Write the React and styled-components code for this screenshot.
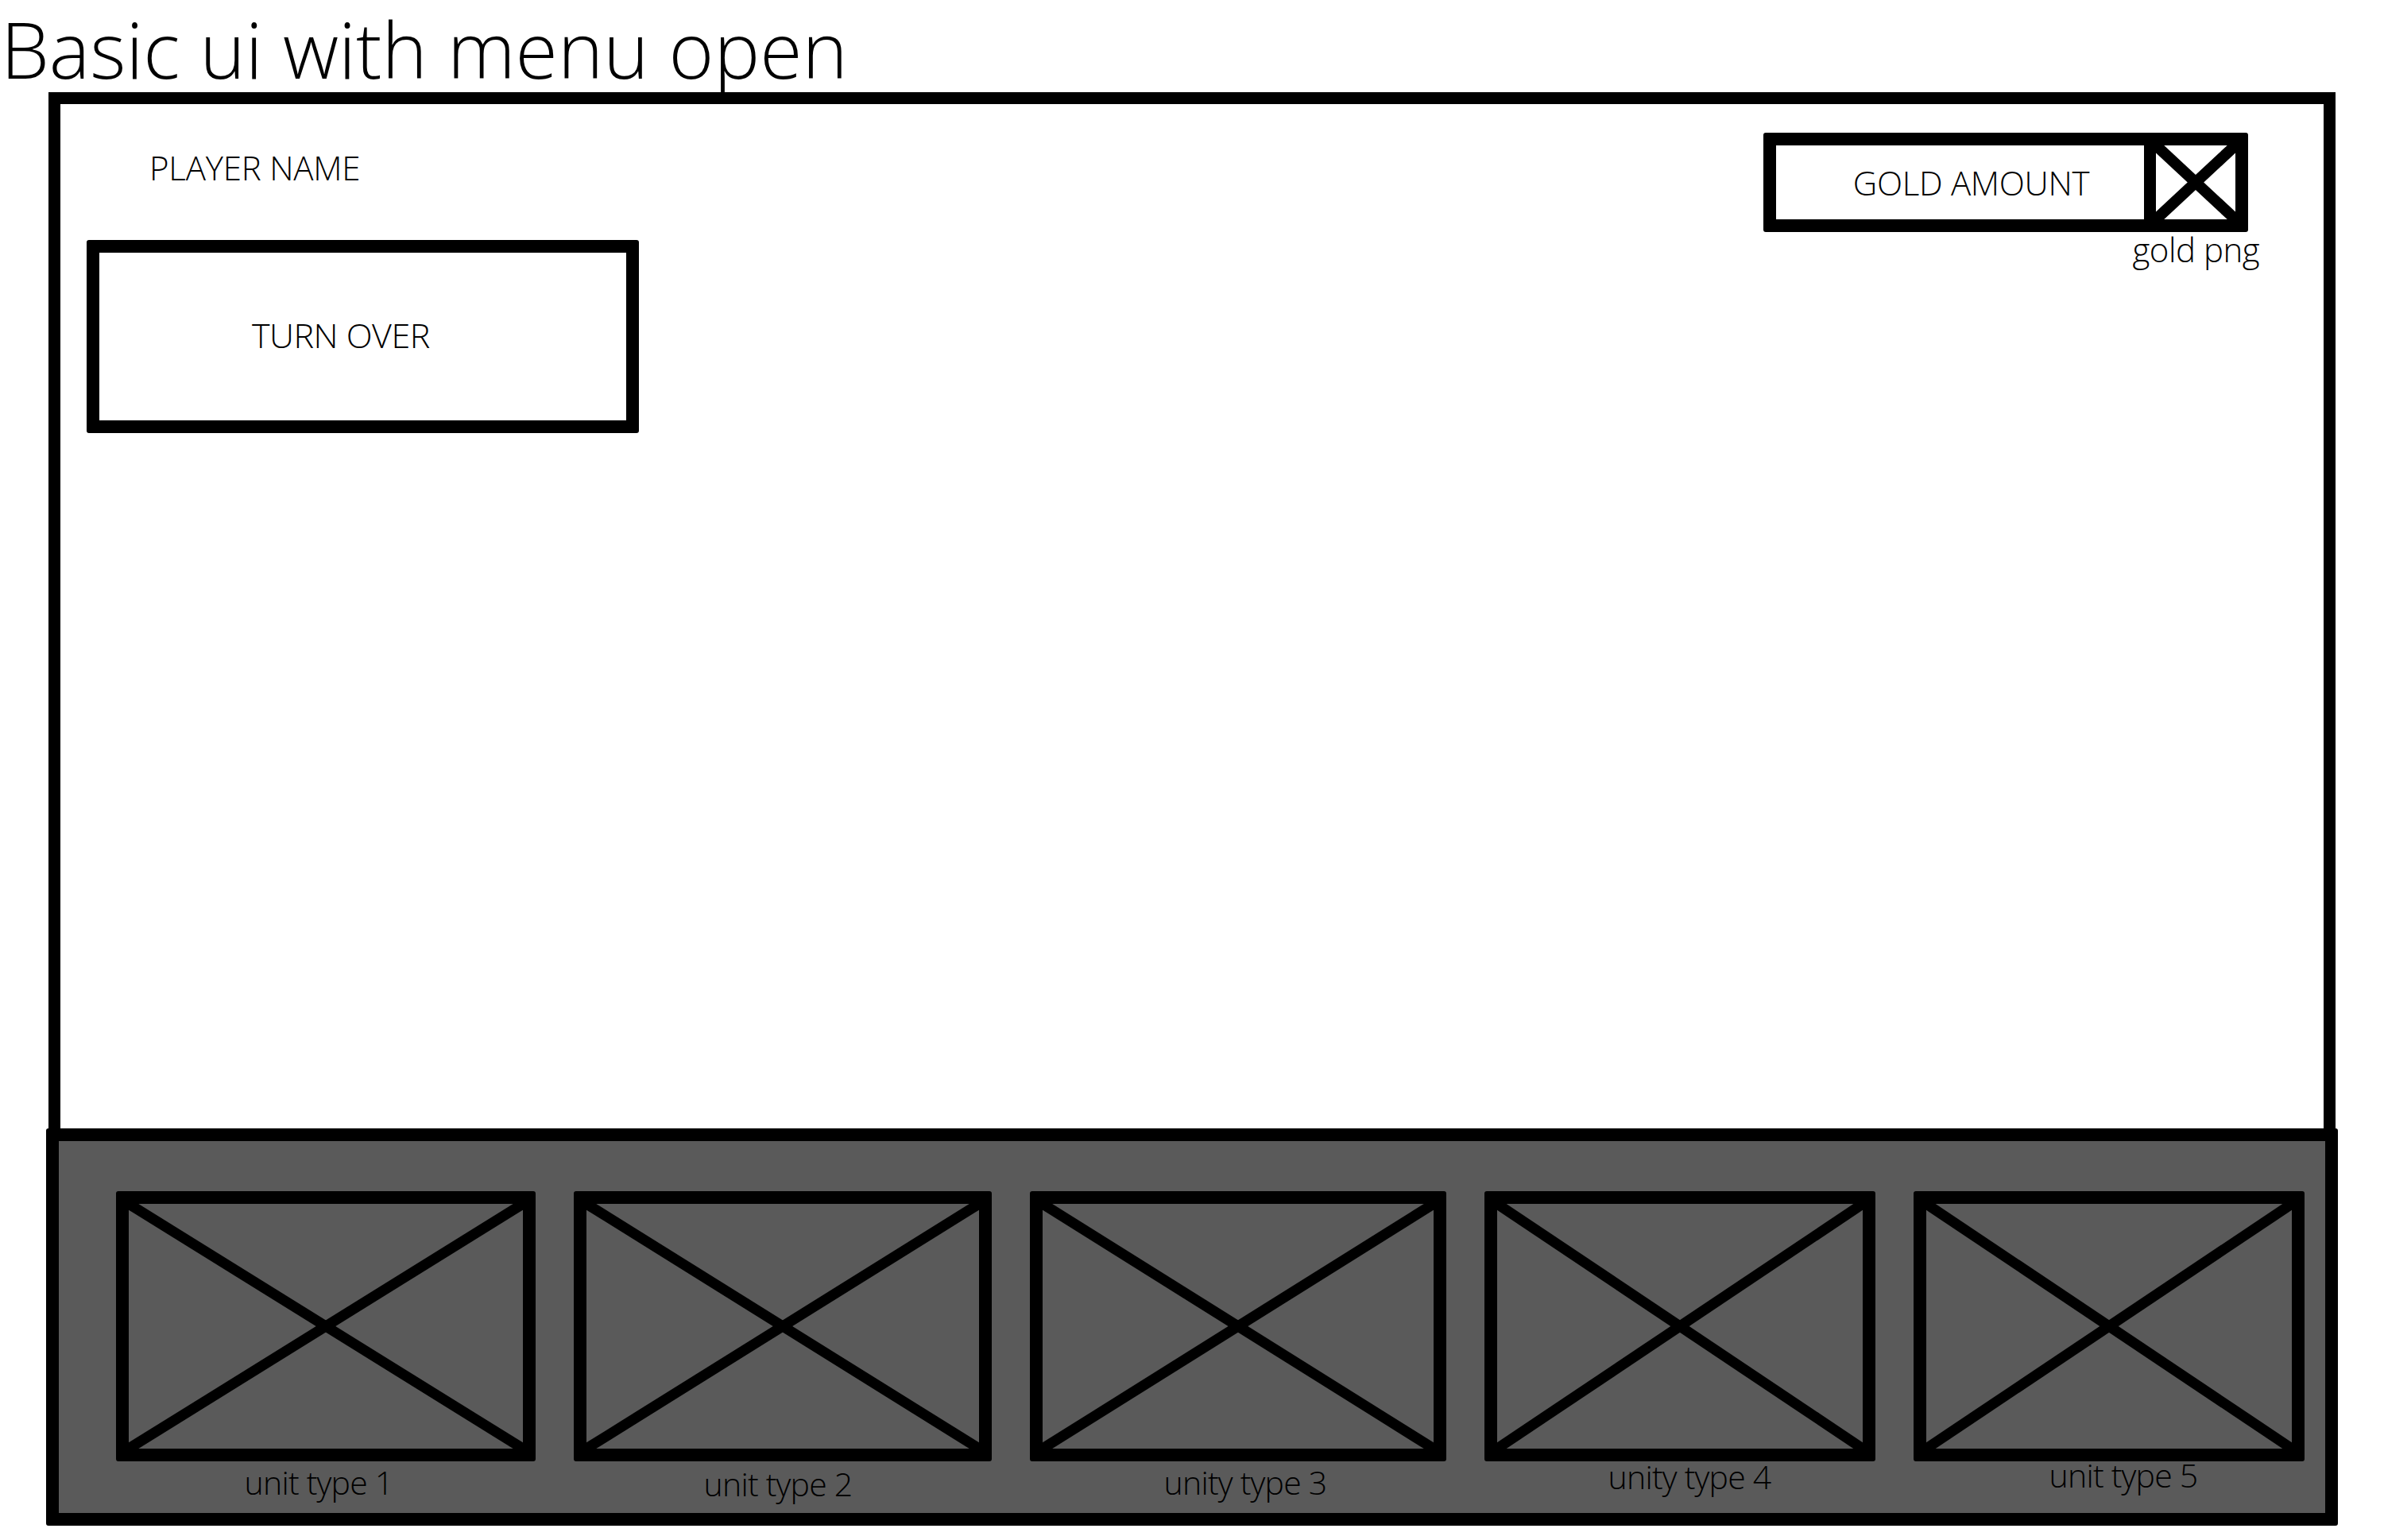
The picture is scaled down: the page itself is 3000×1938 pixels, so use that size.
import React from 'react';
import styled, { createGlobalStyle } from 'styled-components';

const GlobalStyle = createGlobalStyle`
    html, body {
        margin: 0;
        padding: 0;
        background: #ffffff;
    }
    body {
        font-family: "Open Sans", "Liberation Sans", sans-serif;
        color: #000000;
    }
`;

const units = [
    { id: 1, label: 'unit type 1', width: 528, dx: -9, dy: 0 },
    { id: 2, label: 'unit type 2', width: 526, dx: -6, dy: 2 },
    { id: 3, label: 'unity type 3', width: 524, dx: 9, dy: 0 },
    { id: 4, label: 'unity type 4', width: 492, dx: 12, dy: -7 },
    { id: 5, label: 'unit type 5', width: 492, dx: 18, dy: -9 },
];

const Crossed = ({ stroke }) => (
    <CrossSvg viewBox="0 0 100 100" preserveAspectRatio="none">
        <line x1="0" y1="0" x2="100" y2="100" stroke="#000" strokeWidth={stroke} vectorEffect="non-scaling-stroke" />
        <line x1="100" y1="0" x2="0" y2="100" stroke="#000" strokeWidth={stroke} vectorEffect="non-scaling-stroke" />
    </CrossSvg>
);

const App = () => {
    return (
        <Page>
            <GlobalStyle />
            <Title>Basic ui with menu open</Title>
            <Screen>
                <Canvas>
                    <TopRow>
                        <LeftColumn>
                            <PlayerName>PLAYER NAME</PlayerName>
                            <TurnOver>
                                <TurnOverText>TURN OVER</TurnOverText>
                            </TurnOver>
                        </LeftColumn>
                        <RightColumn>
                            <GoldBox>
                                <GoldAmount>GOLD AMOUNT</GoldAmount>
                                <GoldIcon>
                                    <Crossed stroke={14} />
                                </GoldIcon>
                            </GoldBox>
                            <GoldCaption>gold png</GoldCaption>
                        </RightColumn>
                    </TopRow>
                </Canvas>
                <UnitBar>
                    {units.map(unit => (
                        <UnitSlot key={unit.id} $width={unit.width}>
                            <UnitCard>
                                <Crossed stroke={13} />
                            </UnitCard>
                            <UnitLabel $dx={unit.dx} $dy={unit.dy}>{unit.label}</UnitLabel>
                        </UnitSlot>
                    ))}
                </UnitBar>
            </Screen>
        </Page>
    );
};

const Page = styled.div`
    width: 3000px;
    height: 1938px;
    padding-top: 11px;
    box-sizing: border-box;
    overflow: hidden;
`;

const Title = styled.h1`
    margin: 0 0 4px 0;
    padding-left: 1px;
    font-family: "Open Sans", "Liberation Sans", sans-serif;
    font-weight: 300;
    font-size: 97px;
    line-height: 101px;
    letter-spacing: 0;
    color: #000;
    white-space: nowrap;
`;

const Screen = styled.div`
    margin-left: 58px;
    width: 2884px;
    display: flex;
    flex-direction: column;
`;

const Canvas = styled.div`
    margin: 0 3px;
    height: 1304px;
    box-sizing: border-box;
    border: 15px solid #000;
    border-bottom: none;
    background: #fff;
    padding: 36px 95px 0 33px;
`;

const TopRow = styled.div`
    display: flex;
    justify-content: space-between;
    align-items: flex-start;
`;

const LeftColumn = styled.div`
    display: flex;
    flex-direction: column;
    padding-top: 23px;
`;

const PlayerName = styled.div`
    margin-left: 79px;
    font-size: 42px;
    font-weight: 300;
    line-height: 42px;
    letter-spacing: -0.2px;
    color: #000;
`;

const TurnOver = styled.div`
    margin-top: 70px;
    width: 695px;
    height: 243px;
    box-sizing: border-box;
    border: 16px solid #000;
    border-radius: 3px;
    padding: 82px 0 0 192px;
`;

const TurnOverText = styled.div`
    font-size: 43px;
    font-weight: 300;
    line-height: 43px;
    letter-spacing: -0.5px;
    color: #000;
`;

const RightColumn = styled.div`
    display: flex;
    flex-direction: column;
    align-items: flex-end;
`;

const GoldBox = styled.div`
    display: flex;
    width: 610px;
    height: 125px;
    box-sizing: border-box;
    border: 16px solid #000;
    border-radius: 3px;
`;

const GoldAmount = styled.div`
    flex: 1;
    display: flex;
    align-items: center;
    justify-content: center;
    padding-left: 28px;
    font-size: 42px;
    font-weight: 300;
    line-height: 42px;
    letter-spacing: -0.3px;
    color: #000;
`;

const GoldIcon = styled.div`
    width: 100px;
    border-left: 15px solid #000;
    display: flex;
`;

const GoldCaption = styled.div`
    margin-top: 1px;
    margin-right: -14px;
    font-size: 42px;
    font-weight: 300;
    line-height: 42px;
    letter-spacing: -0.5px;
    color: #000;
`;

const UnitBar = styled.div`
    height: 500px;
    box-sizing: border-box;
    border: 16px solid #000;
    border-radius: 3px;
    background: #5a5a5a;
    display: flex;
    align-items: flex-start;
    gap: 48px;
    padding: 63px 0 0 72px;
`;

const UnitSlot = styled.div`
    width: ${p => p.$width}px;
    flex-shrink: 0;
    display: flex;
    flex-direction: column;
    align-items: center;
`;

const UnitCard = styled.div`
    width: 100%;
    height: 340px;
    box-sizing: border-box;
    border: 16px solid #000;
    border-radius: 3px;
    display: flex;
`;

const CrossSvg = styled.svg`
    width: 100%;
    height: 100%;
    display: block;
`;

const UnitLabel = styled.div`
    margin-top: ${p => 6 + p.$dy}px;
    margin-left: ${p => p.$dx * 2}px;
    font-size: 41px;
    font-weight: 300;
    line-height: 41px;
    letter-spacing: -0.8px;
    color: #000;
    white-space: nowrap;
`;

export default App;
